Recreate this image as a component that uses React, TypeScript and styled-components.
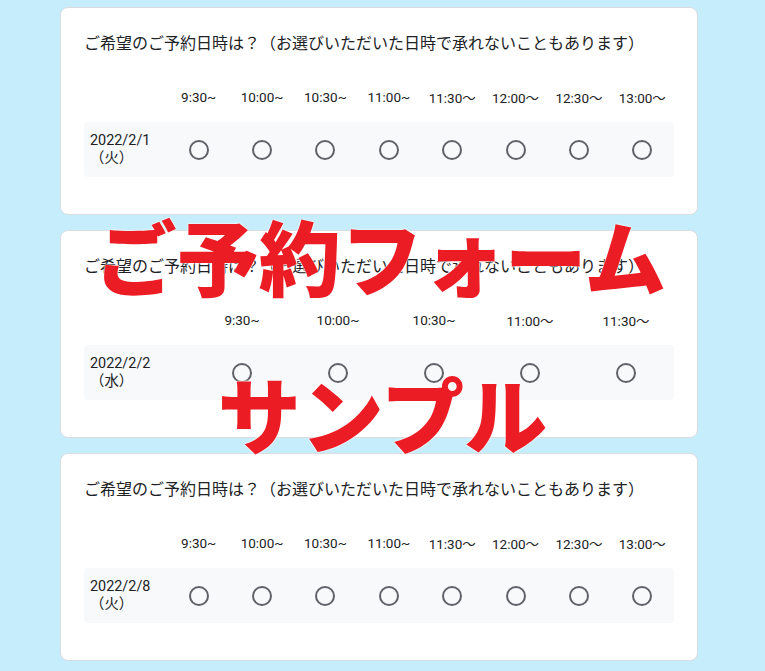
import React from 'react';
import styled, { createGlobalStyle } from 'styled-components';

const GlobalStyle = createGlobalStyle`
  html, body {
    margin: 0;
    padding: 0;
    background: #c6edfb;
  }
  body {
    font-family: Roboto, "Noto Sans CJK JP", sans-serif;
    color: #202124;
  }
`;

const Page = styled.div`
  position: relative;
  width: 765px;
  height: 671px;
  overflow: hidden;
  box-sizing: border-box;
  padding: 7px 0 0 60px;
  display: flex;
  flex-direction: column;
  gap: 15px;
`;

const Card = styled.section`
  width: 638px;
  box-sizing: border-box;
  background: #fff;
  border: 1px solid #dadce0;
  border-radius: 8px;
  padding: 24px 23px 37px;
`;

const Question = styled.div`
  font-family: "Noto Sans CJK JP", sans-serif;
  font-size: 16px;
  line-height: 20px;
  margin-bottom: 20px;
`;

const Grid = styled.div<{ $label: number; $cols: number }>`
  display: grid;
  grid-template-columns: ${(p) => `${p.$label}px repeat(${p.$cols}, 1fr)`};
`;

const HeadCell = styled.div`
  height: 50px;
  display: flex;
  align-items: center;
  justify-content: center;
  font-size: 13.5px;
  white-space: nowrap;
`;

const Row = styled(Grid)`
  background: #f8f9fa;
  border-radius: 4px;
  height: 55px;
  align-items: center;
`;

const DateCell = styled.div`
  padding-left: 6px;
  font-size: 14.4px;
  line-height: 18px;
`;

const RadioCell = styled.div`
  display: flex;
  justify-content: center;
  align-items: center;
`;

const Radio = styled.span`
  width: 20px;
  height: 20px;
  box-sizing: border-box;
  border: 2px solid #5f6368;
  border-radius: 50%;
`;

const Overlay = styled.div`
  position: absolute;
  left: 0;
  right: 0;
  top: 214px;
  display: flex;
  flex-direction: column;
  align-items: center;
  gap: 75px;
  pointer-events: none;
`;

const Stamp = styled.div<{ $size: number; $shift: number }>`
  font-family: "Noto Sans CJK JP", sans-serif;
  font-weight: 900;
  font-size: ${(p) => p.$size}px;
  line-height: ${(p) => p.$size}px;
  margin-left: ${(p) => p.$shift}px;
  color: #ec1c24;
  white-space: nowrap;
  text-shadow: 0 0 2px #fff, 0 0 2px #fff;
`;

type Block = { date: string; day: string; times: string[]; label: number };

const allTimes = ['9:30~', '10:00~', '10:30~', '11:00~', '11:30〜', '12:00〜', '12:30〜', '13:00〜'];

const blocks: Block[] = [
  { date: '2022/2/1', day: '（火）', times: allTimes, label: 83 },
  { date: '2022/2/2', day: '（水）', times: ['9:30~', '10:00~', '10:30~', '11:00〜', '11:30〜'], label: 110 },
  { date: '2022/2/8', day: '（火）', times: allTimes, label: 83 },
];

const App: React.FC = () => {
  return (
    <>
      <GlobalStyle />
      <Page>
        {blocks.map((b) => (
          <Card key={b.date}>
            <Question>ご希望のご予約日時は？（お選びいただいた日時で承れないこともあります）</Question>
            <Grid $label={b.label} $cols={b.times.length}>
              <div />
              {b.times.map((t) => (
                <HeadCell key={t}>{t}</HeadCell>
              ))}
            </Grid>
            <Row $label={b.label} $cols={b.times.length}>
              <DateCell>
                {b.date}
                <br />
                {b.day}
              </DateCell>
              {b.times.map((t) => (
                <RadioCell key={t}>
                  <Radio />
                </RadioCell>
              ))}
            </Row>
          </Card>
        ))}
        <Overlay>
          <Stamp $size={82} $shift={-4}>ご予約フォーム</Stamp>
          <Stamp $size={83} $shift={0}>サンプル</Stamp>
        </Overlay>
      </Page>
    </>
  );
};

export default App;
